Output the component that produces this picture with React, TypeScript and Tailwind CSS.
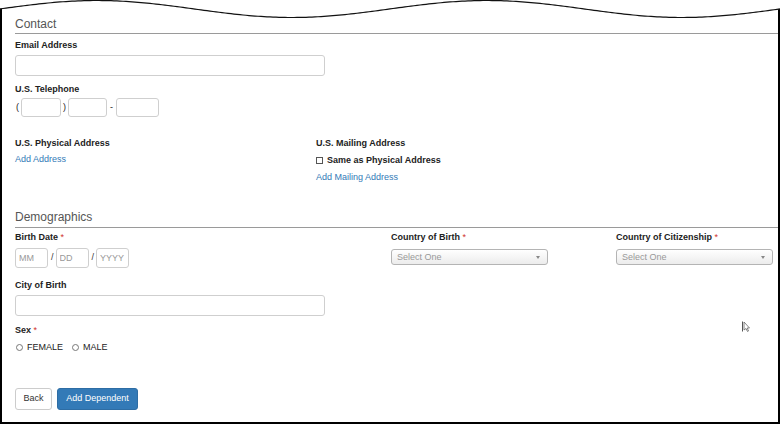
import React from "react";

const Label = ({ children, req }: { children: React.ReactNode; req?: boolean }) => (
  <div className="text-[9px] leading-[12px] font-bold text-[#222]">
    {children}
    {req && <span className="text-[#d0312d] font-normal"> *</span>}
  </div>
);

const Heading = ({ children, className = "" }: { children: React.ReactNode; className?: string }) => (
  <div className={`text-[12px] leading-[17px] text-[#555] border-b border-[#9a9a9a] ${className}`}>{children}</div>
);

const inputCls =
  "block border border-[#cfcfcf] rounded-[3px] bg-white text-[9px] text-[#333] placeholder:text-[#999] outline-none";

const SelectBox = () => (
  <div className="w-[157px] h-[16px] border border-[#b4b4b4] rounded-[3px] bg-gradient-to-b from-white to-[#ececec] flex items-center justify-between pl-[5px] pr-[7px]">
    <span className="text-[9px] leading-none text-[#999]">Select One</span>
    <span className="w-0 h-0 border-l-[2px] border-r-[2px] border-t-[3px] border-l-transparent border-r-transparent border-t-[#888]" />
  </div>
);

export default function App() {
  // wavy torn edge along the top
  const pts: string[] = [];
  for (let x = 0; x <= 780; x += 3) {
    const y = 9 - 8.5 * Math.cos((2 * Math.PI * (x - 97)) / 390);
    pts.push(`${x},${y.toFixed(2)}`);
  }
  const line = "M" + pts.join(" L");

  return (
    <div className="relative w-[780px] h-[425px] bg-white font-['Liberation_Sans',Arial,sans-serif]">
      <div className="h-[424px] border-l-2 border-r-2 border-b-2 border-black pl-[13px] pt-[16px]">
        {/* Contact */}
        <Heading className="h-[18px]">Contact</Heading>

        <div className="mt-[5px]">
          <Label>Email Address</Label>
        </div>
        <input className={`${inputCls} px-[4px] mt-[4px] w-[310px] h-[21px]`} />

        <div className="mt-[7px]">
          <Label>U.S. Telephone</Label>
        </div>
        <div className="mt-[3px] flex items-center text-[9px] text-[#222]">
          <span className="ml-[1px] mr-[2px]">(</span>
          <input className={`${inputCls} px-[4px] w-[40px] h-[19px]`} />
          <span className="ml-[2px] mr-[2px]">)</span>
          <input className={`${inputCls} px-[4px] w-[39px] h-[19px]`} />
          <span className="ml-[3px] mr-[3px]">-</span>
          <input className={`${inputCls} px-[4px] w-[43px] h-[19px]`} />
        </div>

        <div className="mt-[20px] flex">
          <div className="w-[301px]">
            <Label>U.S. Physical Address</Label>
            <div className="mt-[4px] text-[9px] leading-[12px] text-[#337ab7]">Add Address</div>
          </div>
          <div>
            <Label>U.S. Mailing Address</Label>
            <div className="mt-[5px] flex items-center">
              <span className="w-[7px] h-[7px] border border-[#555] mr-[4px]" />
              <Label>Same as Physical Address</Label>
            </div>
            <div className="mt-[5px] text-[9px] leading-[12px] text-[#337ab7]">Add Mailing Address</div>
          </div>
        </div>

        {/* Demographics */}
        <Heading className="mt-[26px] h-[19px]">Demographics</Heading>

        <div className="mt-[3px] flex">
          <div className="w-[376px]">
            <Label req>Birth Date</Label>
            <div className="mt-[5px] flex items-center text-[9px] text-[#333]">
              <input placeholder="MM" className={`${inputCls} px-[3px] w-[33px] h-[20px]`} />
              <span className="ml-[3px] mr-[2px]">/</span>
              <input placeholder="DD" className={`${inputCls} px-[3px] w-[33px] h-[20px]`} />
              <span className="ml-[3px] mr-[2px]">/</span>
              <input placeholder="YYYY" className={`${inputCls} px-[3px] w-[33px] h-[20px]`} />
            </div>
          </div>
          <div className="w-[225px]">
            <Label req>Country of Birth</Label>
            <div className="mt-[6px]">
              <SelectBox />
            </div>
          </div>
          <div>
            <Label req>Country of Citizenship</Label>
            <div className="mt-[6px]">
              <SelectBox />
            </div>
          </div>
        </div>

        <div className="mt-[11px]">
          <Label>City of Birth</Label>
        </div>
        <input className={`${inputCls} px-[4px] mt-[4px] w-[310px] h-[21px]`} />

        <div className="mt-[8px]">
          <Label req>Sex</Label>
        </div>
        <div className="mt-[5px] flex items-center text-[9px] leading-[12px] text-[#222]">
          <span className="ml-[1px] w-[7px] h-[7px] rounded-full border border-[#777]" />
          <span className="ml-[4px]">FEMALE</span>
          <span className="ml-[9px] w-[7px] h-[7px] rounded-full border border-[#777]" />
          <span className="ml-[4px]">MALE</span>
        </div>

        <div className="mt-[35px] flex gap-[5px]">
          <button className="w-[37px] h-[22px] border border-[#ccc] rounded-[3px] bg-white text-[9px] text-[#333]">
            Back
          </button>
          <button className="w-[81px] h-[22px] border border-[#2e6da4] rounded-[3px] bg-[#337ab7] text-[9px] text-white">
            Add Dependent
          </button>
        </div>
      </div>

      {/* torn top edge */}
      <svg className="absolute top-0 left-0" width="780" height="20" viewBox="0 0 780 20">
        <path d={`M0,0 L${pts.join(" L")} L780,0 Z`} fill="white" />
        <path d={line} fill="none" stroke="#111" strokeWidth="1.2" />
      </svg>

      {/* mouse cursor */}
      <svg className="absolute left-[741px] top-[321px]" width="10" height="12" viewBox="0 0 10 12">
        <path d="M1.5 0.5 V10.5" stroke="#555" strokeWidth="1" />
        <path d="M3 1 L3 9 L5 7.5 L6.5 10.5 L7.5 10 L6.2 7 L8.5 7 Z" fill="white" stroke="#666" strokeWidth="0.8" />
      </svg>
    </div>
  );
}
